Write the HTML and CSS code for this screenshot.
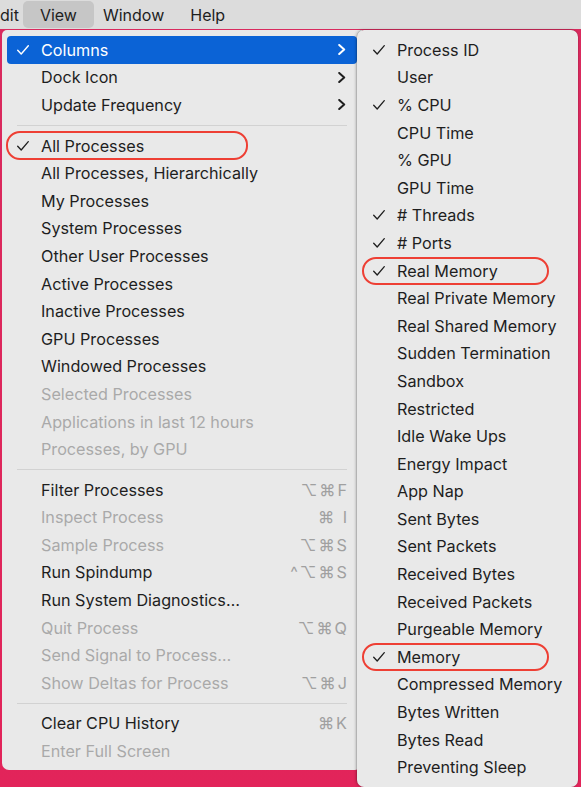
FILE: index.html
```html
<!DOCTYPE html>
<html>
<head>
<meta charset="utf-8">
<link rel="stylesheet" href="styles.css">
</head>
<body>
<div class="menubar">
  <div class="mb-item mb-first">dit</div>
  <div class="mb-item mb-active">View</div>
  <div class="mb-item">Window</div>
  <div class="mb-item">Help</div>
</div>
<div class="stage">
  <div class="menu main">
    <div class="row hl"><span class="chk"><svg width="12" height="10" viewBox="0 0 12 10"><polyline points="0.7,5.2 4.2,9 11.3,0.7" fill="none" stroke="#fff" stroke-width="1.4" stroke-linecap="round" stroke-linejoin="round"/></svg></span><span class="lbl">Columns</span><span class="chev"><svg width="8" height="11" viewBox="0 0 8 11"><polyline points="1.2,1 6.2,5.5 1.2,10" fill="none" stroke="#fff" stroke-width="2" stroke-linecap="round" stroke-linejoin="round"/></svg></span></div>
    <div class="row"><span class="chk"></span><span class="lbl">Dock Icon</span><span class="chev"><svg width="8" height="11" viewBox="0 0 8 11"><polyline points="1.2,1 6.2,5.5 1.2,10" fill="none" stroke="#1e1e1e" stroke-width="2" stroke-linecap="round" stroke-linejoin="round"/></svg></span></div>
    <div class="row"><span class="chk"></span><span class="lbl">Update Frequency</span><span class="chev"><svg width="8" height="11" viewBox="0 0 8 11"><polyline points="1.2,1 6.2,5.5 1.2,10" fill="none" stroke="#1e1e1e" stroke-width="2" stroke-linecap="round" stroke-linejoin="round"/></svg></span></div>
    <div class="sep"></div>
    <div class="row ring ring-main"><span class="chk"><svg width="12" height="10" viewBox="0 0 12 10"><polyline points="0.7,5.2 4.2,9 11.3,0.7" fill="none" stroke="#1e1e1e" stroke-width="1.3" stroke-linecap="round" stroke-linejoin="round"/></svg></span><span class="lbl">All Processes</span></div>
    <div class="row"><span class="chk"></span><span class="lbl">All Processes, Hierarchically</span></div>
    <div class="row"><span class="chk"></span><span class="lbl">My Processes</span></div>
    <div class="row"><span class="chk"></span><span class="lbl">System Processes</span></div>
    <div class="row"><span class="chk"></span><span class="lbl">Other User Processes</span></div>
    <div class="row"><span class="chk"></span><span class="lbl">Active Processes</span></div>
    <div class="row"><span class="chk"></span><span class="lbl">Inactive Processes</span></div>
    <div class="row"><span class="chk"></span><span class="lbl">GPU Processes</span></div>
    <div class="row"><span class="chk"></span><span class="lbl">Windowed Processes</span></div>
    <div class="row dis"><span class="chk"></span><span class="lbl">Selected Processes</span></div>
    <div class="row dis"><span class="chk"></span><span class="lbl">Applications in last 12 hours</span></div>
    <div class="row dis"><span class="chk"></span><span class="lbl">Processes, by GPU</span></div>
    <div class="sep"></div>
    <div class="row"><span class="chk"></span><span class="lbl">Filter Processes</span><span class="key">⌥⌘F</span></div>
    <div class="row dis"><span class="chk"></span><span class="lbl">Inspect Process</span><span class="key">⌘ I</span></div>
    <div class="row dis"><span class="chk"></span><span class="lbl">Sample Process</span><span class="key">⌥⌘S</span></div>
    <div class="row"><span class="chk"></span><span class="lbl">Run Spindump</span><span class="key">^⌥⌘S</span></div>
    <div class="row"><span class="chk"></span><span class="lbl">Run System Diagnostics…</span></div>
    <div class="row dis"><span class="chk"></span><span class="lbl">Quit Process</span><span class="key">⌥⌘Q</span></div>
    <div class="row dis"><span class="chk"></span><span class="lbl">Send Signal to Process…</span></div>
    <div class="row dis"><span class="chk"></span><span class="lbl">Show Deltas for Process</span><span class="key">⌥⌘J</span></div>
    <div class="sep"></div>
    <div class="row"><span class="chk"></span><span class="lbl">Clear CPU History</span><span class="key">⌘K</span></div>
    <div class="row dis"><span class="chk"></span><span class="lbl">Enter Full Screen</span></div>
  </div>
  <div class="menu sub">
    <div class="row"><span class="chk"><svg width="12" height="10" viewBox="0 0 12 10"><polyline points="0.7,5.2 4.2,9 11.3,0.7" fill="none" stroke="#1e1e1e" stroke-width="1.3" stroke-linecap="round" stroke-linejoin="round"/></svg></span><span class="lbl">Process ID</span></div>
    <div class="row"><span class="chk"></span><span class="lbl">User</span></div>
    <div class="row"><span class="chk"><svg width="12" height="10" viewBox="0 0 12 10"><polyline points="0.7,5.2 4.2,9 11.3,0.7" fill="none" stroke="#1e1e1e" stroke-width="1.3" stroke-linecap="round" stroke-linejoin="round"/></svg></span><span class="lbl">% CPU</span></div>
    <div class="row"><span class="chk"></span><span class="lbl">CPU Time</span></div>
    <div class="row"><span class="chk"></span><span class="lbl">% GPU</span></div>
    <div class="row"><span class="chk"></span><span class="lbl">GPU Time</span></div>
    <div class="row"><span class="chk"><svg width="12" height="10" viewBox="0 0 12 10"><polyline points="0.7,5.2 4.2,9 11.3,0.7" fill="none" stroke="#1e1e1e" stroke-width="1.3" stroke-linecap="round" stroke-linejoin="round"/></svg></span><span class="lbl"># Threads</span></div>
    <div class="row"><span class="chk"><svg width="12" height="10" viewBox="0 0 12 10"><polyline points="0.7,5.2 4.2,9 11.3,0.7" fill="none" stroke="#1e1e1e" stroke-width="1.3" stroke-linecap="round" stroke-linejoin="round"/></svg></span><span class="lbl"># Ports</span></div>
    <div class="row ring ring-sub"><span class="chk"><svg width="12" height="10" viewBox="0 0 12 10"><polyline points="0.7,5.2 4.2,9 11.3,0.7" fill="none" stroke="#1e1e1e" stroke-width="1.3" stroke-linecap="round" stroke-linejoin="round"/></svg></span><span class="lbl">Real Memory</span></div>
    <div class="row"><span class="chk"></span><span class="lbl">Real Private Memory</span></div>
    <div class="row"><span class="chk"></span><span class="lbl">Real Shared Memory</span></div>
    <div class="row"><span class="chk"></span><span class="lbl">Sudden Termination</span></div>
    <div class="row"><span class="chk"></span><span class="lbl">Sandbox</span></div>
    <div class="row"><span class="chk"></span><span class="lbl">Restricted</span></div>
    <div class="row"><span class="chk"></span><span class="lbl">Idle Wake Ups</span></div>
    <div class="row"><span class="chk"></span><span class="lbl">Energy Impact</span></div>
    <div class="row"><span class="chk"></span><span class="lbl">App Nap</span></div>
    <div class="row"><span class="chk"></span><span class="lbl">Sent Bytes</span></div>
    <div class="row"><span class="chk"></span><span class="lbl">Sent Packets</span></div>
    <div class="row"><span class="chk"></span><span class="lbl">Received Bytes</span></div>
    <div class="row"><span class="chk"></span><span class="lbl">Received Packets</span></div>
    <div class="row"><span class="chk"></span><span class="lbl">Purgeable Memory</span></div>
    <div class="row ring ring-sub"><span class="chk"><svg width="12" height="10" viewBox="0 0 12 10"><polyline points="0.7,5.2 4.2,9 11.3,0.7" fill="none" stroke="#1e1e1e" stroke-width="1.3" stroke-linecap="round" stroke-linejoin="round"/></svg></span><span class="lbl">Memory</span></div>
    <div class="row"><span class="chk"></span><span class="lbl">Compressed Memory</span></div>
    <div class="row"><span class="chk"></span><span class="lbl">Bytes Written</span></div>
    <div class="row"><span class="chk"></span><span class="lbl">Bytes Read</span></div>
    <div class="row"><span class="chk"></span><span class="lbl">Preventing Sleep</span></div>
  </div>
</div>
</body>
</html>
```

FILE: styles.css
```css
html, body {
  margin: 0;
  padding: 0;
}
body {
  width: 581px;
  height: 787px;
  overflow: hidden;
  background: linear-gradient(180deg, #d92a5e 0%, #e2245a 100%);
  font-family: "Inter", "DejaVu Sans", sans-serif;
  font-size: 16.2px;
  color: #1e1e1e;
}
.menubar {
  height: 29px;
  background: #dcdcdc;
  display: flex;
  align-items: center;
  font-size: 16px;
}
.mb-item {
  height: 27px;
  display: flex;
  align-items: center;
  padding: 0 13px;
  border-radius: 5px;
}
.mb-first {
  padding: 0 4px 0 0;
}
.mb-active {
  padding: 0 17px;
  margin: 0 -4px 0 0;
  background: #c6c6c6;
}
.stage {
  display: flex;
  align-items: flex-start;
  margin-top: 1px;
}
.menu {
  background: #e9e9e9;
  display: flex;
  flex-direction: column;
}
.main {
  margin-left: 2px;
  width: 360px;
  padding: 6px 0 5px;
  border-radius: 5px 0 7px 7px;
}
.sub {
  width: 221px;
  margin-left: -5px;
  padding: 6px 0 6px;
  border-radius: 7px;
  position: relative;
  z-index: 2;
  box-shadow: -1px 0 3px rgba(0, 0, 0, 0.28), 0 0 0 0.5px rgba(0, 0, 0, 0.12);
}
.row {
  height: 27.6px;
  margin: 0 5px;
  padding: 0 11px 0 10px;
  display: flex;
  align-items: center;
  border-radius: 4px;
  position: relative;
  white-space: nowrap;
}
.sub .row {
  padding-left: 11px;
}
.chk {
  width: 24px;
  flex: none;
  display: flex;
  align-items: center;
}
.lbl {
  flex: 1;
}
.hl {
  background: #0b63d6;
  color: #fff;
}
.dis {
  color: #a9a9a9;
}
.chev {
  display: flex;
  align-items: center;
}
.key {
  color: #a0a0a0;
  letter-spacing: 2px;
  margin-right: -3px;
  font-family: "Inter", "DejaVu Sans", sans-serif;
}
.sep {
  height: 1px;
  background: #d2d2d2;
  margin: 6px 15px 6px 15px;
}
.ring::after {
  content: "";
  position: absolute;
  border: 2.5px solid #ee3f34;
  box-sizing: border-box;
  border-radius: 14px;
  pointer-events: none;
}
.ring-main::after {
  left: -1px;
  top: -1px;
  width: 242px;
  height: 29px;
}
.ring-sub::after {
  left: 0;
  top: 0;
  width: 187px;
  height: 28px;
}
```
